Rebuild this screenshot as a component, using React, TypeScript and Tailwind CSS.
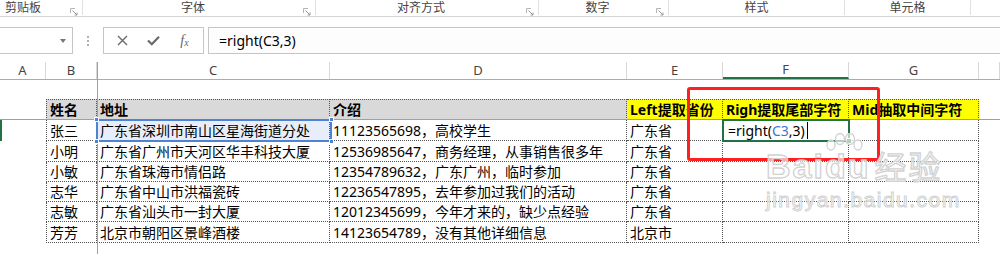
import React from "react";

const font = "font-['Noto_Sans','Noto_Sans_CJK_SC',sans-serif]";

const groups = [
	{ label: "剪贴板", w: "w-[83px]", launcher: true, left: true },
	{ label: "字体", w: "w-[233px]", launcher: true, left: false },
	{ label: "对齐方式", w: "w-[223px]", launcher: true, left: false },
	{ label: "数字", w: "w-[130px]", launcher: true, left: false },
	{ label: "样式", w: "w-[176px]", launcher: false, left: false },
	{ label: "单元格", w: "w-[126px]", launcher: false, left: false },
];

const colW = [
	"w-[46px]",
	"w-[51px]",
	"w-[233px]",
	"w-[297px]",
	"w-[96px]",
	"w-[126px]",
	"w-[130px]",
	"w-[21px]",
];
const letters = ["A", "B", "C", "D", "E", "F", "G", ""];

const rowH = ["h-[21px]", "h-[21px]", "h-[20px]", "h-[20px]", "h-[20px]", "h-[21px]"];

const people = [
	["张三", "广东省深圳市南山区星海街道分处", "11123565698，高校学生", "广东省"],
	["小明", "广东省广州市天河区华丰科技大厦", "12536985647，商务经理，从事销售很多年", "广东省"],
	["小敏", "广东省珠海市情侣路", "12354789632，广东广州，临时参加", "广东省"],
	["志华", "广东省中山市洪福瓷砖", "12236547895，去年参加过我们的活动", "广东省"],
	["志敏", "广东省汕头市一封大厦", "12012345699，今年才来的，缺少点经验", "广东省"],
	["芳芳", "北京市朝阳区景峰酒楼", "14123654789，没有其他详细信息", "北京市"],
];

const Launcher = () => (
	<svg width="8" height="8" viewBox="0 0 8 8" className="mr-[4px] mt-[8px] shrink-0">
		<path d="M0.5 5V0.5H5" fill="none" stroke="#b4b4b4" strokeWidth="1" />
		<path d="M2.5 2.5L7 7M7 4.5V7H4.5" fill="none" stroke="#9a9a9a" strokeWidth="1" />
	</svg>
);

const cell = "flex items-center px-[3px] border-r border-b border-dotted border-[#555] whitespace-nowrap overflow-hidden";

export default function App() {
	return (
		<div className={`relative w-[1000px] h-[254px] overflow-hidden bg-white text-black ${font}`}>
			{/* ribbon group labels */}
			<div className="flex h-[17px] items-start border-b border-[#d5d5d5]">
				{groups.map((g, i) => (
					<div key={i} className={`${g.w} flex h-[15px] border-r border-[#e1e1e1]`}>
						<div
							className={`flex-1 pt-[1px] text-[12px] leading-[14px] text-[#444] ${
								g.left ? "pl-[5px]" : "text-center"
							}`}
						>
							{g.label}
						</div>
						{g.launcher && <Launcher />}
					</div>
				))}
			</div>

			{/* formula bar */}
			<div className="mt-[10px] flex h-[27px]">
				<div className="relative w-[73px] border-y border-r border-[#c6c6c6] bg-white">
					<div className="absolute right-[6px] top-[11px] h-0 w-0 border-x-[3px] border-t-[4px] border-x-transparent border-t-[#777]" />
				</div>
				<div className="flex w-[30px] flex-col items-center justify-center gap-[2px]">
					<div className="h-[2px] w-[2px] bg-[#b0b0b0]" />
					<div className="h-[2px] w-[2px] bg-[#b0b0b0]" />
					<div className="h-[2px] w-[2px] bg-[#b0b0b0]" />
				</div>
				<div className="flex w-[101px] items-center border border-[#c6c6c6] bg-white">
					<div className="flex w-[34px] justify-center pl-[2px]">
						<svg width="11" height="11" viewBox="0 0 11 11">
							<path d="M1 1L10 10M10 1L1 10" stroke="#6a6a6a" strokeWidth="1.4" />
						</svg>
					</div>
					<div className="flex w-[30px] justify-center">
						<svg width="13" height="11" viewBox="0 0 13 11">
							<path d="M1 5.5L4.8 9.3L12 1.8" fill="none" stroke="#6a6a6a" strokeWidth="2.2" />
						</svg>
					</div>
					<div className="flex flex-1 justify-center pr-[2px] font-['Liberation_Serif',serif] text-[14px] italic leading-none text-[#666]">
						f<span className="text-[10px] mt-[4px]">x</span>
					</div>
				</div>
				<div className="ml-[4px] flex flex-1 items-center border-y border-l border-[#c6c6c6] bg-[#fdfdfd] pl-[10px] text-[14px]">
					=right(C3,3)
				</div>
			</div>

			{/* column headers */}
			<div className="mt-[8px] flex h-[18px] border-b border-[#ababab] text-[13px] text-[#444]">
				{letters.map((l, i) => (
					<div
						key={i}
						className={`${colW[i]} flex items-center justify-center border-r border-[#d8d8d8] ${
							i === 5 ? "border-b-2 border-b-[#217346]" : ""
						}`}
					>
						{l}
					</div>
				))}
			</div>

			{/* row 1 */}
			<div className="h-[19px]" />

			{/* row 2 header */}
			<div className="flex h-[21px] text-[14px] font-bold">
				<div className={colW[0]} />
				<div className={`${colW[1]} ${cell} border-t border-l bg-[#d9d9d9]`}>姓名</div>
				<div className={`${colW[2]} ${cell} border-t bg-[#d9d9d9]`}>地址</div>
				<div className={`${colW[3]} ${cell} border-t bg-[#d9d9d9]`}>介绍</div>
				<div className={`${colW[4]} ${cell} border-t bg-[#ffff00]`}>Left提取省份</div>
				<div className={`${colW[5]} ${cell} border-t bg-[#ffff00]`}>Righ提取尾部字符</div>
				<div className={`${colW[6]} ${cell} border-t bg-[#ffff00]`}>Mid抽取中间字符</div>
			</div>

			{/* data rows */}
			{people.map((p, r) => (
				<div key={r} className={`flex ${rowH[r]} text-[14px]`}>
					<div className={colW[0]} />
					<div className={`${colW[1]} ${cell} border-l`}>{p[0]}</div>
					<div className={`${colW[2]} ${cell} ${r === 0 ? "bg-[#e8eef9]" : ""}`}>{p[1]}</div>
					<div className={`${colW[3]} ${cell}`}>{p[2]}</div>
					<div className={`${colW[4]} ${cell}`}>{p[3]}</div>
					<div className={`${colW[5]} ${cell} pl-[5px]`}>
						{r === 0 && (
							<>
								=right(<span className="text-[#3f74d6]">C3</span>,3)
								<span className="ml-[2px] inline-block h-[17px] w-px bg-black" />
							</>
						)}
					</div>
					<div className={`${colW[6]} ${cell}`} />
				</div>
			))}

			{/* freeze pane lines */}
			<div className="absolute left-0 top-[119px] h-px w-[1000px] bg-[#a0a0a0]" />
			<div className="absolute left-[97px] top-[62px] h-[192px] w-px bg-[#a0a0a0]" />

			{/* active row marker */}
			<div className="absolute left-0 top-[120px] h-[21px] w-[2px] bg-[#217346]" />

			{/* referenced range C3 */}
			<div className="absolute left-[96px] top-[119px] h-[23px] w-[236px] border-2 border-[#4f81d4]" />
			<div className="absolute left-[94px] top-[117px] h-[5px] w-[5px] border border-white bg-[#4f81d4]" />
			<div className="absolute left-[329px] top-[117px] h-[5px] w-[5px] border border-white bg-[#4f81d4]" />
			<div className="absolute left-[94px] top-[139px] h-[5px] w-[5px] border border-white bg-[#4f81d4]" />
			<div className="absolute left-[329px] top-[139px] h-[5px] w-[5px] border border-white bg-[#4f81d4]" />

			{/* active cell F3 */}
			<div className="absolute left-[722px] top-[119px] h-[23px] w-[128px] border-2 border-[#217346]" />
			<div className="absolute left-[846px] top-[138px] h-[6px] w-[6px] border border-white bg-[#217346]" />

			{/* red highlight box */}
			<div className="absolute left-[687px] top-[87px] h-[74px] w-[193px] rounded-[3px] border-[3px] border-[#ff1f1f]" />

			{/* watermark */}
			<div className="pointer-events-none absolute left-[766px] top-[149px] flex flex-col items-start">
				<div className="relative flex items-end font-['Liberation_Sans',sans-serif] text-[34px] font-bold leading-none tracking-[2px] text-[rgba(255,255,255,0.65)] [-webkit-text-stroke:1.3px_#d2d2d2]">
					<span>Bai</span>
					<span className="relative">
						du
						<svg width="38" height="18" viewBox="0 0 38 18" className="absolute left-[0px] top-[-16px]">
							<g fill="rgba(255,255,255,0.65)" stroke="#d2d2d2" strokeWidth="1.3">
								<ellipse cx="6" cy="12" rx="4" ry="5" />
								<ellipse cx="15" cy="6" rx="4.5" ry="5.5" />
								<ellipse cx="25" cy="6" rx="4.5" ry="5.5" />
								<ellipse cx="33" cy="12" rx="4" ry="5" />
							</g>
						</svg>
					</span>
					<span className={`ml-[4px] ${font} text-[32px] font-normal`}>经验</span>
				</div>
				<div className="mt-[6px] font-['Liberation_Sans',sans-serif] text-[21px] leading-none tracking-[1.5px] text-[rgba(255,255,255,0.65)] [-webkit-text-stroke:1px_#d2d2d2]">
					jingyan.baidu.com
				</div>
			</div>
		</div>
	);
}
